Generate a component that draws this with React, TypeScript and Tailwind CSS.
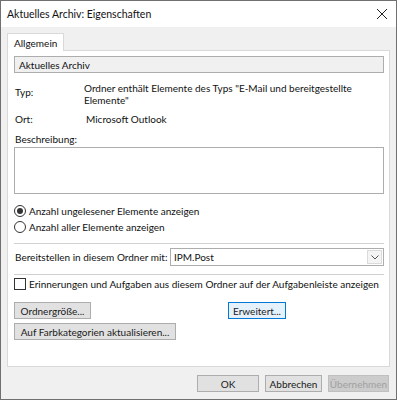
import React from 'react';

const font = { fontFamily: 'Lato, "Noto Sans", sans-serif' };

// Classic Win32 push button
const Btn: React.FC<{ label: string; className?: string; variant?: 'normal' | 'focus' | 'disabled' }> = ({
  label,
  className = '',
  variant = 'normal',
}) => {
  const look =
    variant === 'focus'
      ? 'border-[#0078d7] bg-[#e5f1fb] text-[#1a1a1a]'
      : variant === 'disabled'
        ? 'border-[#bfbfbf] bg-[#cccccc] text-[#a0a0a0]'
        : 'border-[#adadad] bg-[#e1e1e1] text-[#1a1a1a]';
  return (
    <div className={`flex h-[17px] shrink-0 items-center justify-center whitespace-nowrap border leading-none ${look} ${className}`}>
      {label}
    </div>
  );
};

const Radio: React.FC<{ checked?: boolean; label: string }> = ({ checked, label }) => (
  <div className="flex h-[16px] items-center gap-[3px] whitespace-nowrap">
    <div className="flex h-[12px] w-[12px] shrink-0 items-center justify-center rounded-full border border-[#333] bg-white">
      {checked && <div className="h-[6px] w-[6px] rounded-full bg-[#333]" />}
    </div>
    <span>{label}</span>
  </div>
);

export default function App() {
  return (
    <div className="flex h-[400px] w-[397px] flex-col border border-[#707070] bg-[#f0f0f0] text-[10px] leading-[14px] text-[#111]" style={font}>
      {/* Title bar */}
      <div className="flex h-[26px] shrink-0 items-center justify-between bg-white pl-[6px] pr-[6px]">
        <span className="text-[10.5px]">Aktuelles Archiv: Eigenschaften</span>
        <svg width="12" height="12" viewBox="0 0 12 12" className="mr-[2px]">
          <path d="M1 1 L11 11 M11 1 L1 11" stroke="#222" strokeWidth="1" fill="none" />
        </svg>
      </div>

      <div className="flex flex-1 flex-col px-[6px] pt-[6px]">
        {/* Tab */}
        <div className="relative z-10 -mb-px flex">
          <div className="flex h-[18px] items-center border border-b-0 border-[#d9d9d9] bg-white px-[6px]">Allgemein</div>
        </div>

        {/* Panel */}
        <div className="flex h-[317px] shrink-0 flex-col border border-[#d9d9d9] bg-white pl-[6px] pr-[5px]">
          <div className="mt-[5px] flex h-[17px] items-center border border-[#adadad] bg-[#f0f0f0] px-[4px]">Aktuelles Archiv</div>

          <div className="mt-[9px] flex leading-[12px]">
            <div className="mt-[4px] w-[70px] pl-[1px]">Typ:</div>
            <div className="w-[285px]">
              Ordner enthält Elemente des Typs "E-Mail und bereitgestellte Elemente"
            </div>
          </div>

          <div className="mt-[6px] flex">
            <div className="w-[72px] pl-[1px]">Ort:</div>
            <div>Microsoft Outlook</div>
          </div>

          <div className="mt-[6px] pl-[1px]">Beschreibung:</div>
          <div className="mt-[1px] h-[47px] shrink-0 border border-[#adadad] bg-white" />

          <div className="mt-[9px] flex flex-col">
            <Radio checked label="Anzahl ungelesener Elemente anzeigen" />
            <Radio label="Anzahl aller Elemente anzeigen" />
          </div>

          <div className="mt-[8px] h-px shrink-0 bg-[#d0d0d0]" />

          <div className="mt-[4px] flex items-center">
            <span className="w-[156px] shrink-0 whitespace-nowrap pl-[1px]">Bereitstellen in diesem Ordner mit:</span>
            <div className="flex h-[18px] flex-1 items-center border border-[#adadad] bg-white">
              <span className="flex-1 px-[3px]">IPM.Post</span>
              <div className="mr-px flex h-[14px] w-[15px] items-center justify-center border border-[#dadada] bg-[#f4f4f4]">
                <svg width="8" height="5" viewBox="0 0 8 5">
                  <path d="M0.5 0.5 L4 4 L7.5 0.5" stroke="#555" strokeWidth="1" fill="none" />
                </svg>
              </div>
            </div>
          </div>

          <div className="mt-[8px] h-px shrink-0 bg-[#d0d0d0]" />

          <div className="mt-[1px] flex h-[16px] items-center gap-[3px] whitespace-nowrap">
            <div className="h-[12px] w-[12px] shrink-0 border border-[#333] bg-white" />
            <span>Erinnerungen und Aufgaben aus diesem Ordner auf der Aufgabenleiste anzeigen</span>
          </div>

          <div className="mt-[10px] flex items-center">
            <Btn label="Ordnergröße..." className="w-[77px]" />
            <Btn label="Erweitert..." variant="focus" className="ml-[137px] w-[58px]" />
          </div>
          <Btn label="Auf Farbkategorien aktualisieren..." className="mt-[4px] w-[162px]" />
        </div>

        {/* Dialog buttons */}
        <div className="mt-[8px] flex justify-end gap-[6px] pr-[1px]">
          <Btn label="OK" className="w-[62px]" />
          <Btn label="Abbrechen" className="w-[57px]" />
          <Btn label="Übernehmen" variant="disabled" className="w-[61px]" />
        </div>
      </div>
    </div>
  );
}
